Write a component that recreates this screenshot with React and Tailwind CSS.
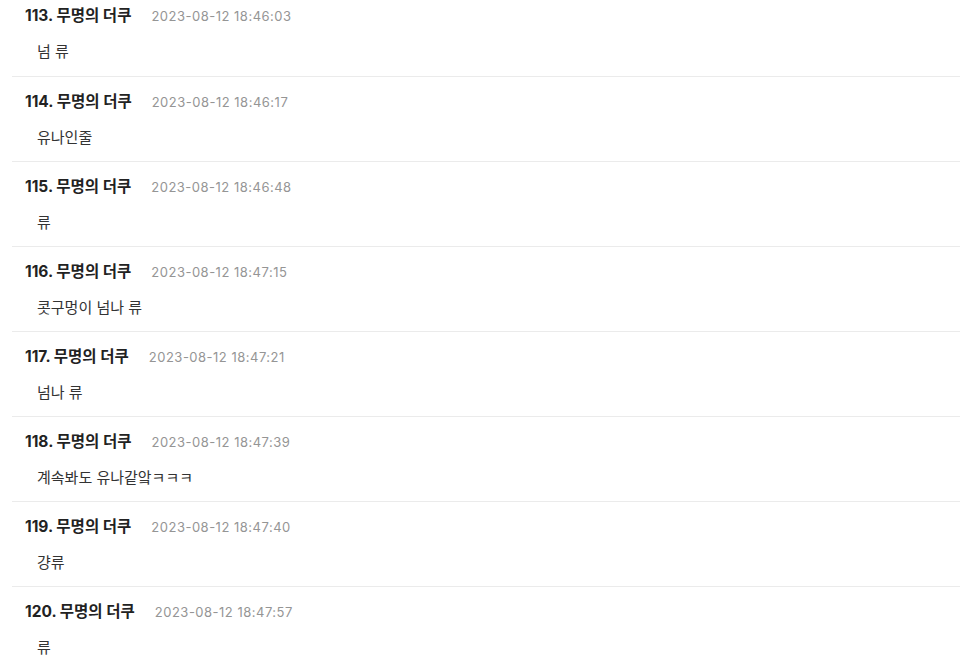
const rows = [
  { n: 113, time: '2023-08-12 18:46:03', body: '넘 류' },
  { n: 114, time: '2023-08-12 18:46:17', body: '유나인줄' },
  { n: 115, time: '2023-08-12 18:46:48', body: '류' },
  { n: 116, time: '2023-08-12 18:47:15', body: '콧구멍이 넘나 류' },
  { n: 117, time: '2023-08-12 18:47:21', body: '넘나 류' },
  { n: 118, time: '2023-08-12 18:47:39', body: '계속봐도 유나같앜ㅋㅋㅋ' },
  { n: 119, time: '2023-08-12 18:47:40', body: '걍류' },
  { n: 120, time: '2023-08-12 18:47:57', body: '류' },
];

export default function App() {
  return (
    <div
      className="w-[960px] h-[669px] overflow-hidden bg-white text-[#222]"
      style={{ fontFamily: 'Inter, "Noto Sans CJK KR", sans-serif' }}
    >
      <div className="-mt-[9px] pl-[12px]">
        {rows.map((r, i) => (
          <div key={r.n} className={`h-[85px] ${i > 0 ? 'border-t border-[#ebebeb]' : ''}`}>
            <div className="pl-[13px] pt-[14px] flex items-baseline gap-[20px]">
              <span className="text-[15.5px] font-bold leading-[22px]">{r.n}. 무명의 더쿠</span>
              <span className="text-[13px] tracking-[0.5px] text-[#959595] leading-[22px]">{r.time}</span>
            </div>
            <div className="pl-[25px] pt-[15px] text-[15px] leading-[20px] text-[#333]">{r.body}</div>
          </div>
        ))}
      </div>
    </div>
  );
}
